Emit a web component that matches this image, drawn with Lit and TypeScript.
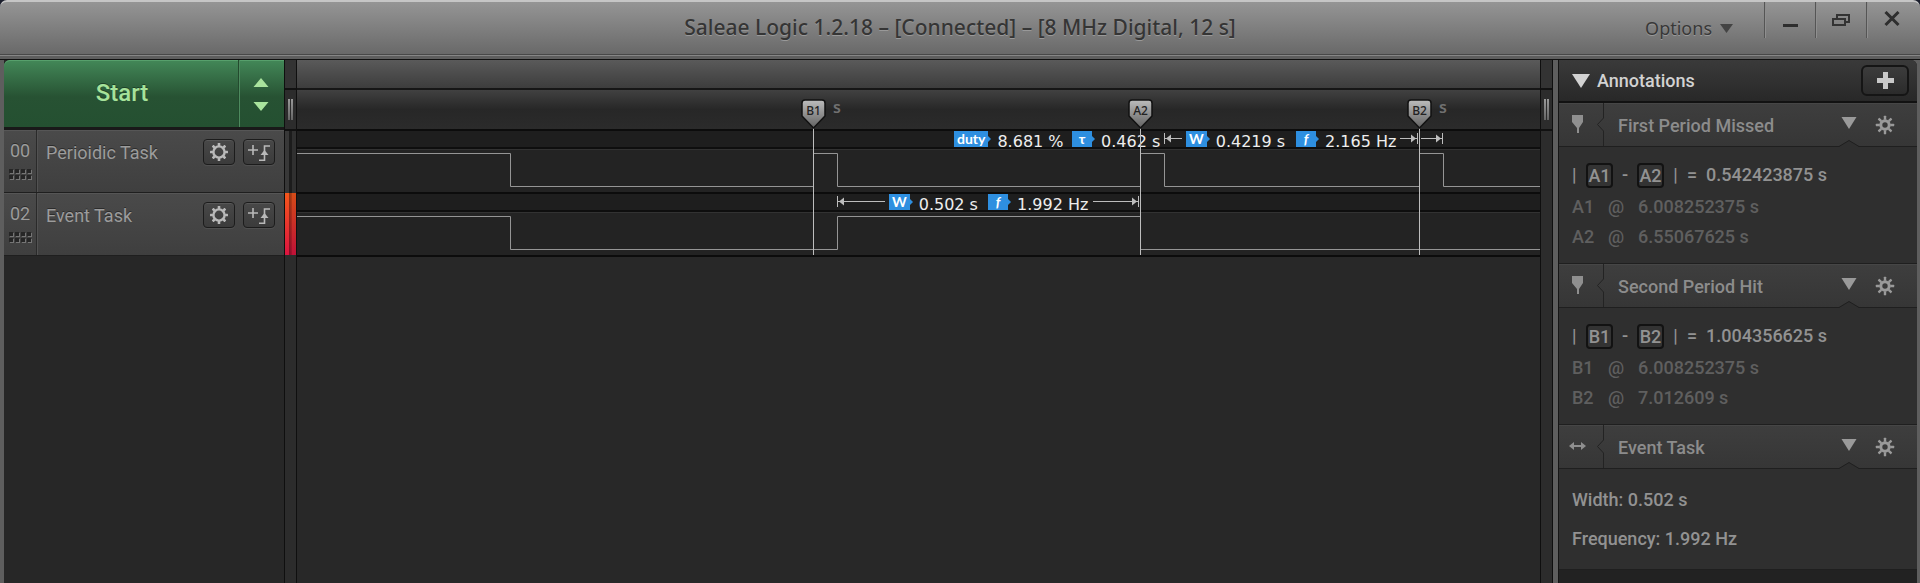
import { LitElement, html, svg, css, nothing } from "lit";
import { customElement, property } from "lit/decorators.js";

const gearTeeth = (n: number, r: number, w: number, len: number) =>
  Array.from({ length: n }, (_, i) => svg`<rect x=${-w / 2} y=${-r} width=${w} height=${len} rx="0.5" transform="rotate(${(i * 360) / n})"></rect>`);

const channelGear = html`<svg class="ico" width="20" height="20" viewBox="-10 -10 20 20" fill="#b9b9b9" aria-hidden="true">
  <circle r="5.6" fill="none" stroke="#b9b9b9" stroke-width="2.4"></circle>${gearTeeth(8, 9, 2.6, 3)}</svg>`;

const noteGear = html`<svg class="ico" width="20" height="20" viewBox="-10 -10 20 20" fill="#9a9a9a" aria-hidden="true">
  <circle r="4.2" fill="none" stroke="#9a9a9a" stroke-width="3"></circle>${gearTeeth(8, 9.2, 2.4, 4)}</svg>`;

const triggerIcon = html`<svg class="ico" width="24" height="20" viewBox="0 0 24 20" fill="none" stroke="#b9b9b9" stroke-width="1.6" aria-hidden="true">
  <path d="M1 8h10M6 3v10M12 18.200h5.500V4H23"></path><path d="M13.500 13l4-5 4 5z" fill="#b9b9b9" stroke="none"></path></svg>`;

@customElement("channel-row")
export class ChannelRow extends LitElement {
  @property() index = "";
  @property() name = "";

  static styles = css`
    :host { display: flex; height: 62px; color: #9c9c9c; font: 400 18px/20px Roboto, sans-serif;
      background: linear-gradient(#4a4a4a, #3f3f3f); border-bottom: 1px solid #1f1f1f; box-shadow: inset 0 1px #565656; text-shadow: 0 -1px #2c2c2c; }
    .num { width: 32px; display: flex; flex-direction: column; align-items: center; padding-top: 11px; gap: 8px;
      border-right: 1px solid #2a2a2a; box-shadow: 1px 0 #525252; }
    .name { flex: 1; padding: 13px 0 0 9px; }
    .btns { display: flex; gap: 8px; padding: 9px 9px 0 0; align-items: flex-start; }
    button { width: 32px; height: 26px; padding: 0; display: grid; place-items: center; border: 1px solid #1c1c1c; border-radius: 4px;
      background: linear-gradient(#484848, #3b3b3b); box-shadow: inset 0 1px #575757, 0 1px #505050; }
    .ico { display: block; }
  `;

  render() {
    return html`<div class="num"><span>${this.index}</span>
        <svg class="ico" width="23" height="11" viewBox="0 0 23 11" aria-hidden="true">
          ${[0, 6, 12, 18].map((x) => [0, 6].map((y) => svg`<rect x=${x + 1} y=${y + 1} width="4" height="4" fill="#757575"></rect><rect x=${x} y=${y} width="4" height="4" fill="#262626"></rect>`))}
        </svg></div>
      <span class="name">${this.name}</span>
      <div class="btns">
        <button aria-label="Channel settings">${channelGear}</button>
        <button aria-label="Add trigger">${triggerIcon}</button>
      </div>`;
  }
}

interface Part { x: number; tag: string; value: string }
interface Span { from: number; to: number; left: boolean; right: boolean }
interface Lane { start: boolean; edges: number[]; parts: Part[]; spans: Span[] }

const HIGH = 4.5;
const LOW = 37.5;

const lanes: Lane[] = [
  {
    start: true,
    edges: [213, 516, 540, 843, 867, 1122, 1146],
    parts: [
      { x: 657, tag: "duty", value: "8.681 %" },
      { x: 775, tag: "τ", value: "0.462 s" },
      { x: 889, tag: "W", value: "0.4219 s" },
      { x: 999, tag: "f", value: "2.165 Hz" },
    ],
    spans: [
      { from: 867, to: 885, left: true, right: false },
      { from: 1102, to: 1121, left: false, right: true },
      { from: 1123, to: 1146, left: false, right: true },
    ],
  },
  {
    start: true,
    edges: [213, 540, 843],
    parts: [
      { x: 592, tag: "W", value: "0.502 s" },
      { x: 691, tag: "f", value: "1.992 Hz" },
    ],
    spans: [
      { from: 540, to: 588, left: true, right: false },
      { from: 795, to: 842, left: false, right: true },
    ],
  },
];

const wavePath = (lane: Lane) => {
  let level = lane.start;
  let d = `M0 ${level ? HIGH : LOW}`;
  for (const x of lane.edges) {
    level = !level;
    d += `H${x + 0.5}V${level ? HIGH : LOW}`;
  }
  return d + "H6000";
};

const markers = [
  { x: 516, label: "B1", unit: "s" },
  { x: 843, label: "A2", unit: "" },
  { x: 1122, label: "B2", unit: "s" },
];

@customElement("logic-graph")
export class LogicGraph extends LitElement {
  static styles = css`
    :host { display: block; position: relative; overflow: hidden; background: #282828; }
    .overview { height: 28px; background: linear-gradient(#5a5a5a, #3d3d3d); border-bottom: 2px solid #161616; }
    .ruler { height: 39px; background: linear-gradient(#414141, #272727 50%, #2b2b2b); border-bottom: 2px solid #0c0c0c; }
    .lane { height: 61px; border-bottom: 2px solid #0c0c0c; background: #232323; }
    .band { position: relative; height: 16px; background: #1e1e1e; border-bottom: 2px solid #0e0e0e; box-shadow: 0 1px #323232; }
    .wave { display: block; width: 100%; height: 43px; }
    .part { position: absolute; top: 0; display: flex; gap: 9px; white-space: nowrap; }
    .tag { position: relative; height: 16px; min-width: 14px; padding: 0 3px; text-align: center; background: #2e8fe0; color: #fff; font: 700 14px/16px Lato, "Open Sans", sans-serif; }
    .tag::after { content: ""; position: absolute; left: 100%; top: 5px; border: 3px solid transparent; border-left-color: #2e8fe0; border-right: 0; }
    .tag.f { font-style: italic; }
    .val { font: 16px/22px "DejaVu Sans", sans-serif; color: #eee; }
    .span { position: absolute; top: 2px; height: 12px; overflow: visible; }
    .marker { position: absolute; top: 39px; width: 30px; height: 156px; margin-left: -15px; }
    .flag { position: absolute; inset: 0; }
    .text { position: absolute; left: 0; top: 5px; width: 31px; text-align: center; font: 500 12px/14px "Noto Sans", sans-serif; color: #222; }
    .unit { position: absolute; left: 35px; top: 0; font: 600 16px/16px "Noto Sans", sans-serif; color: #707070; }
  `;

  render() {
    return html`
      <div class="overview"></div>
      <div class="ruler"></div>
      ${lanes.map((l) => html`<div class="lane">
        <div class="band">
          ${l.parts.map((p) => html`<div class="part" style="left:${p.x}px"><span class="tag ${p.tag}">${p.tag}</span><span class="val">${p.value}</span></div>`)}
          ${l.spans.map((s) => {
            const w = s.to - s.from;
            return html`<svg class="span" style="left:${s.from}px;width:${w}px" fill="#bdbdbd" aria-hidden="true">
              <rect x="1" y="5" width=${w - 1} height="1"></rect>
              ${s.left ? svg`<rect width="1" height="11"></rect><path d="M2 5.500l5-4v8z"></path>` : nothing}
              ${s.right ? svg`<rect x=${w - 1} width="1" height="11"></rect><path d="M${w - 2} 5.500l-5-4v8z"></path>` : nothing}
            </svg>`;
          })}
        </div>
        <svg class="wave" aria-hidden="true"><path d=${wavePath(l)} fill="none" stroke="#959595"></path></svg>
      </div>`)}
      ${markers.map((m) => html`<div class="marker" style="left:${m.x}px">
        <svg class="flag" width="30" height="156" viewBox="0 0 30 156" aria-hidden="true">
          <defs><linearGradient id="g" x1="0" y1="0" x2="0" y2="1"><stop offset="0" stop-color="#bcbcbc"></stop><stop offset="1" stop-color="#626262"></stop></linearGradient></defs>
          <path d="M15.500 28V156" stroke="#bdbdbd"></path>
          <path d="M4 4q0-3 3-3h17q3 0 3 3v13l-11.500 12L4 17z" fill="url(#g)" stroke="#111" stroke-width="1.500"></path>
        </svg>
        <span class="text">${m.label}</span>
        ${m.unit ? html`<span class="unit">${m.unit}</span>` : nothing}
      </div>`)}
    `;
  }
}

@customElement("note-section")
export class NoteSection extends LitElement {
  @property() heading = "";
  @property() kind = "pin";

  static styles = css`
    :host { display: block; }
    .head { position: relative; display: flex; align-items: center; height: 43px; background: linear-gradient(#3e3e3e, #363636);
      border-bottom: 1px solid #1f1f1f; box-shadow: inset 0 1px #464646; font: 500 18px/20px Roboto, sans-serif; color: #8c8c8c; }
    .kind { width: 45px; height: 43px; display: block; }
    .title { flex: 1; padding: 2px 0 0 14px; }
    button { padding: 0; border: 0; background: none; display: block; }
    .fold { margin-right: 18px; height: 22px; }
    .gear { margin-right: 22px; height: 22px; }
    .notch { position: absolute; right: 56px; bottom: -2px; }
    .ico { display: block; }
  `;

  render() {
    const icon = this.kind === "pin"
      ? svg`<path d="M13 12h11v7l-4 6v5h-2v-5l-5-6z"></path>`
      : svg`<path d="M10 21l5-4v3h7v-3l5 4-5 4v-3h-7v3z"></path>`;
    return html`<div class="head">
        <svg class="kind" viewBox="0 0 45 43" fill="#8f8f8f" aria-hidden="true">${icon}<path d="M44.500 0V15L38.500 21.500L44.500 28V43" fill="none" stroke="#232323"></path></svg>
        <span class="title">${this.heading}</span>
        <button class="fold" aria-label="Collapse"><svg class="ico" width="16" height="22" aria-hidden="true"><path d="M0.500 3h15l-7.500 12z" fill="#9a9a9a"></path></svg></button>
        <button class="gear" aria-label="Settings">${noteGear}</button>
        <svg class="notch" width="24" height="8" viewBox="0 0 24 8" aria-hidden="true"><path d="M0 6.500H2L12 0.500L22 6.500H24V8H0z" fill="#2f2f2f"></path><path d="M0 6.500H2L12 0.500L22 6.500H24" fill="none" stroke="#1f1f1f"></path></svg>
      </div>
      <slot></slot>`;
  }
}

@customElement("app-root")
export class AppRoot extends LitElement {
  static styles = css`
    :host { display: flex; flex-direction: column; min-height: 100vh; background: linear-gradient(#1b1e2c 8px, #5e5e5e 8px); box-sizing: border-box; font-family: Roboto, sans-serif; }
    .bar { position: relative; display: flex; justify-content: flex-end; height: 52px; padding-right: 3px; border-top: 2px solid #c6c6c6; border-bottom: 1px solid #484848;
      background: linear-gradient(#959595, #696969); box-shadow: 0 1px #868686; border-radius: 7px 7px 0 0; color: #353535; text-shadow: 0 1px #999; }
    .caption { position: absolute; inset: 0; margin: 0; text-align: center; font: 500 21px/50px "Noto Sans", sans-serif; }
    .opts { position: relative; display: flex; align-items: center; gap: 8px; padding: 0 31px 0 0; border: 0; background: none; color: #383838; font: 18px/24px "Noto Sans", sans-serif; text-shadow: inherit; }
    .win { position: relative; width: 51px; height: 36px; padding: 0; border: 0; background: none; border-left: 1px solid #555; box-shadow: inset 1px 0 #8f8f8f; display: grid; place-items: center; }
    .main { flex: 1; display: grid; grid-template-columns: 280px 13px minmax(0, 1fr) 13px 5px 359px; padding: 0 3px 0 4px; margin-top: 4px; border-top: 1px solid #111; }
    .side { background: #272727; }
    .start { display: flex; height: 67px; border-bottom: 3px solid #191919; }
    .go, .more { border: 0; padding: 0; background: linear-gradient(#438858, #275233 55%, #245031); box-shadow: inset 0 1px #57a06c; color: #a6e29a; }
    .go { flex: 1; font: 500 24px/62px Roboto, sans-serif; padding: 0 0 2px 2px; border-top-left-radius: 6px; border-right: 1px solid #234a2e; text-shadow: 0 -1px #1d4028; }
    .more { width: 45px; padding-right: 2px; display: grid; place-items: center; border-left: 1px solid #4d8a5e; }
    .split { display: flex; flex-direction: column; background: #2c2c2c; border: solid #0f0f0f; border-width: 0 1px; }
    .s1 { height: 28px; border-bottom: 2px solid #111; background: #333; }
    .s2 { height: 39px; border-bottom: 2px solid #111; display: flex; justify-content: center; align-items: center; gap: 1px; }
    .s2 i { width: 2px; height: 21px; background: linear-gradient(#999, #666); }
    .s3 { height: 62px; background: linear-gradient(90deg, #383838, #383838 40%, #1c1c1c 40%, #1c1c1c 60%, #303030 60%); }
    .s4 { height: 62px; background: linear-gradient(90deg, transparent 40%, #0006 40%, #0004 60%, #0002 60%), linear-gradient(#f6571b, #dc1440); }
    .notes { background: #222; border-left: 1px solid #151515; border-top-right-radius: 6px; overflow: hidden; }
    .nhead { display: flex; align-items: center; height: 41px; padding: 0 8px 0 13px; border-bottom: 2px solid #121212; background: linear-gradient(#3a3a3a, #282828); color: #d2d2d2; }
    .nhead h2 { flex: 1; margin: 0 0 0 7px; font: 500 18px/20px Roboto, sans-serif; }
    .add { width: 48px; height: 31px; padding: 0; border: 2px solid #151515; border-radius: 6px; background: linear-gradient(#3c3c3c, #2b2b2b); display: grid; place-items: center; }
    .body { padding: 11px 13px; background: #2f2f2f; border-bottom: 1px solid #1f1f1f; color: #929292; font: 500 18px/30px Roboto, sans-serif; }
    .eq { display: flex; align-items: center; height: 34px; white-space: pre; }
    .key { box-sizing: border-box; width: 27px; height: 25px; border: 2px solid #121212; border-radius: 4px; text-align: center; line-height: 22px; background: #333; }
    .bar1 { width: 14px; }
    .minus { width: 24px; text-align: center; }
    .bar2 { width: 23px; text-align: center; }
    .same { width: 19px; }
    .at { display: grid; grid-template-columns: 36px 30px 1fr; color: #5f5f5f; }
    .tall { padding: 11px 13px; line-height: 39px; }
    p { margin: 0; }
    svg { display: block; }
  `;

  private note(a: string, b: string, diff: string, ta: string, tb: string) {
    return html`<div class="body">
      <div class="eq"><span class="bar1">|</span><span class="key">${a}</span><span class="minus">-</span><span class="key">${b}</span><span class="bar2">|</span><span class="same">=</span><span>${diff}</span></div>
      <div class="at"><span>${a}</span><span>@</span><span>${ta}</span></div>
      <div class="at"><span>${b}</span><span>@</span><span>${tb}</span></div>
    </div>`;
  }

  render() {
    return html`
      <header class="bar">
        <h1 class="caption">Saleae Logic 1.2.18 – [Connected] – [8 MHz Digital, 12 s]</h1>
        <button class="opts">Options <svg width="13" height="9" aria-hidden="true"><path d="M0 0h13l-6.500 9z" fill="#444"></path></svg></button>
        <button class="win" aria-label="Minimize"><svg width="15" height="18" aria-hidden="true"><rect y="13" width="15" height="3" fill="#2e2e2e"></rect></svg></button>
        <button class="win" aria-label="Restore"><svg width="18" height="13" fill="none" stroke="#333" stroke-width="2" aria-hidden="true"><path d="M5 4V1h12v7h-4M1 5h12v6H1z"></path></svg></button>
        <button class="win" aria-label="Close"><svg width="16" height="18" stroke="#2e2e2e" stroke-width="3" aria-hidden="true"><path d="M1.500 1l13 13M14.500 1l-13 13"></path></svg></button>
      </header>
      <main class="main">
        <section class="side">
          <div class="start">
            <button class="go">Start</button>
            <button class="more" aria-label="Capture settings"><svg width="16" height="34" fill="#a9e39d" aria-hidden="true"><path d="M0.500 10L8 1l7.500 9zM0.500 25h15L8 34z"></path></svg></button>
          </div>
          <channel-row index="00" name="Perioidic Task"></channel-row>
          <channel-row index="02" name="Event Task"></channel-row>
        </section>
        <div class="split"><div class="s1"></div><div class="s2"><i></i><i></i></div><div class="s3"></div><div class="s4"></div></div>
        <logic-graph></logic-graph>
        <div class="split"><div class="s1"></div><div class="s2"><i></i><i></i></div></div>
        <div></div>
        <aside class="notes">
          <div class="nhead">
            <svg width="18" height="14" aria-hidden="true"><path d="M0 0h18L9 14z" fill="#d2d2d2"></path></svg>
            <h2>Annotations</h2>
            <button class="add" aria-label="Add annotation"><svg width="17" height="17" aria-hidden="true"><path d="M6 0h5v6h6v5h-6v6H6v-6H0V6h6z" fill="#c8c8c8"></path></svg></button>
          </div>
          <note-section heading="First Period Missed">${this.note("A1", "A2", "0.542423875 s", "6.008252375 s", "6.55067625 s")}</note-section>
          <note-section heading="Second Period Hit">${this.note("B1", "B2", "1.004356625 s", "6.008252375 s", "7.012609 s")}</note-section>
          <note-section heading="Event Task" kind="width"><div class="body tall"><p>Width: 0.502 s</p><p>Frequency: 1.992 Hz</p></div></note-section>
        </aside>
      </main>
    `;
  }
}
